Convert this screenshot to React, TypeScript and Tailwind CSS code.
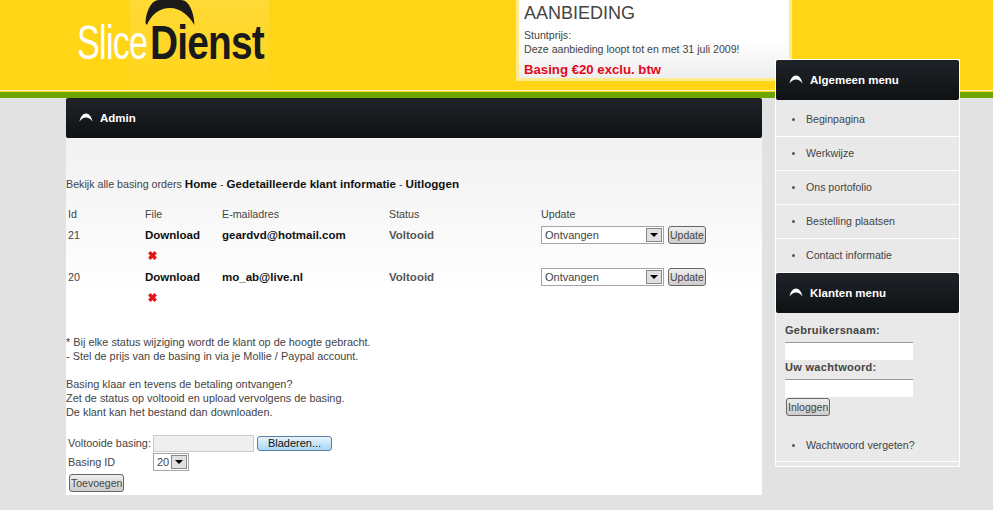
import React from "react";

const font = { arial: "font-['Liberation_Sans',Arial,sans-serif]" };

function Arc({ className }: { className?: string }) {
  return (
    <svg viewBox="0 0 14 9" className={className} fill="currentColor">
      <path d="M0.5 8.5C1.500 3.500 4 0.500 7 0.500s5.500 3 6.500 8C11.500 6 9.500 4.600 7 4.600S2.500 6 0.500 8.500z" />
    </svg>
  );
}

function PanelHeader({ title }: { title: string }) {
  return (
    <div className="flex h-10 items-center rounded-[2px] bg-gradient-to-b from-[#1f2328] to-[#0f1214] pb-[1px] pl-[13px] text-white">
      <Arc className="h-[9px] w-[14px] text-white" />
      <span className="ml-[7px] mt-[2px] text-[11.500px] font-bold">{title}</span>
    </div>
  );
}

function Select({ value, width }: { value: string; width: string }) {
  return (
    <div className={`flex h-[18px] items-center justify-between border border-[#a5a5a5] bg-white pl-[3px] pr-[1px] text-[11px] text-[#444] ${width}`}>
      <span>{value}</span>
      <span className="flex h-[14px] w-[16px] items-center justify-center border border-[#888] bg-[#e0e0e0]">
        <span className="h-0 w-0 border-x-[4px] border-t-[4px] border-x-transparent border-t-black" />
      </span>
    </div>
  );
}

function GreyButton({ label }: { label: string }) {
  return (
    <button className="h-[18px] rounded-[3px] border border-[#666] bg-gradient-to-b from-[#eee] to-[#ccc] px-[1px] text-[10.500px] leading-none text-[#444]">
      {label}
    </button>
  );
}

function RedX() {
  return (
    <svg viewBox="0 0 12 12" className="h-[11px] w-[11px]">
      <path d="M2.500 2.500l7 7M9.500 2.500l-7 7" stroke="#e2161a" strokeWidth="3.600" />
    </svg>
  );
}

const orders = [
  { id: "21", email: "geardvd@hotmail.com" },
  { id: "20", email: "mo_ab@live.nl" },
];

const menu = ["Beginpagina", "Werkwijze", "Ons portofolio", "Bestelling plaatsen", "Contact informatie"];

function MenuItem({ label }: { label: string }) {
  return (
    <li className="flex h-[34px] items-center border-b border-white pl-[16px] text-[10.600px] text-[#444]">
      <span className="mr-[11px] h-[3px] w-[3px] rounded-full bg-[#555]" />
      {label}
    </li>
  );
}

export default function App() {
  return (
    <div className={`${font.arial} min-h-[510px] overflow-hidden bg-[#e2e2e2] text-[10.900px] text-[#444]`}>
      {/* Header */}
      <header className="h-[98px] border-b-[6px] border-[#6fa505] bg-[#ffd516]">
        <div className="flex h-[91px] border-b border-[#fff6c8]">
          <div className="relative ml-[130px] h-[90px] w-[139px] bg-gradient-to-b from-[#ffd935] to-[#ffd516]">
            <svg viewBox="0 0 50 26" className="absolute left-[15px] top-0 h-[26px] w-[50px] text-[#1a1a1a]" fill="currentColor">
              <path d="M0.500 23C1 12 6 0 14 0h22c8 0 13 12 13.500 25C44 16 36 8 25 8S6 15 2 25z" />
            </svg>
            <span className="absolute left-[-53px] top-[18px] origin-left scale-x-[0.71] text-[48px] leading-[50px] tracking-[-1px] text-white">
              Slice
            </span>
            <span className="absolute left-[20px] top-[18px] origin-left scale-x-[0.81] text-[48px] font-bold leading-[50px] tracking-[-1px] text-[#1a1a1a]">
              Dienst
            </span>
          </div>
          <div className="ml-[247px] h-[81px] w-[276px] border-[3px] border-t-0 border-[#ffeb8c] bg-gradient-to-b from-white via-white to-[#eeeeee] pl-[5px]">
            <h2 className="mt-[3px] text-[18px] leading-[21px] text-[#444]">AANBIEDING</h2>
            <p className="mt-[4px] text-[10.600px] leading-[14px]">
              Stuntprijs:
              <br />
              Deze aanbieding loopt tot en met 31 juli 2009!
            </p>
            <p className="mt-[6px] text-[13.200px] font-bold leading-[16px] text-[#e2091e]">Basing €20 exclu. btw</p>
          </div>
        </div>
      </header>

      <div className="flex items-start pl-[66px]">
        {/* Main panel */}
        <main className="h-[397px] w-[696px] bg-gradient-to-b from-[#eeeeee] via-white to-white">
          <PanelHeader title="Admin" />
          <p className="mt-[39px] text-[10.700px] leading-[14px]">
            Bekijk alle basing orders{" "}
            <b className="text-[11.600px] text-[#111]">Home</b> - <b className="text-[11.600px] text-[#111]">Gedetailleerde klant informatie</b> -{" "}
            <b className="text-[11.600px] text-[#111]">Uitloggen</b>
          </p>

          <table className="mt-[12px] table-fixed text-left text-[10.700px]">
            <thead>
              <tr className="h-[22px]">
                <th className="w-[79px] pl-[2px] font-normal">Id</th>
                <th className="w-[77px] font-normal">File</th>
                <th className="w-[167px] font-normal">E-mailadres</th>
                <th className="w-[152px] font-normal">Status</th>
                <th className="font-normal">Update</th>
              </tr>
            </thead>
            <tbody>
              {orders.map((order) => (
                <tr key={order.id} className="h-[42px] align-top">
                  <td className="pl-[2px] pt-[2px]">{order.id}</td>
                  <td className="pt-[2px]">
                    <b className="text-[11.500px] text-[#111]">Download</b>
                    <div className="ml-[2px] mt-[6px]">
                      <RedX />
                    </div>
                  </td>
                  <td className="pt-[2px]">
                    <b className="text-[11.500px] text-[#111]">{order.email}</b>
                  </td>
                  <td className="pt-[2px]">
                    <b className="text-[11.500px] text-[#555]">Voltooid</b>
                  </td>
                  <td className="pt-[1px]">
                    <div className="flex items-center gap-[4px]">
                      <Select value="Ontvangen" width="w-[123px]" />
                      <GreyButton label="Update" />
                    </div>
                  </td>
                </tr>
              ))}
            </tbody>
          </table>

          <p className="mt-[26px] leading-[14px]">
            * Bij elke status wijziging wordt de klant op de hoogte gebracht.
            <br />- Stel de prijs van de basing in via je Mollie / Paypal account.
          </p>
          <p className="mt-[14px] leading-[14px]">
            Basing klaar en tevens de betaling ontvangen?
            <br />
            Zet de status op voltooid en upload vervolgens de basing.
            <br />
            De klant kan het bestand dan downloaden.
          </p>

          <div className="mt-[15px] pl-[2px]">
            <div className="flex h-[18px] items-center">
              <span className="w-[85px]">Voltooide basing:</span>
              <span className="h-[17px] w-[101px] border border-[#ccc] bg-[#efefef]" />
              <button className="ml-[3px] h-[15px] w-[75px] rounded-[3px] border border-[#5b7fa5] bg-gradient-to-b from-[#e6f3fc] to-[#a9d8f5] text-[11px] leading-none text-[#111]">
                Bladeren...
              </button>
            </div>
            <div className="mt-[1px] flex h-[18px] items-center">
              <span className="w-[85px]">Basing ID</span>
              <Select value="20" width="w-[36px]" />
            </div>
            <div className="mt-[3px] pl-[1px]">
              <GreyButton label="Toevoegen" />
            </div>
          </div>
        </main>

        {/* Sidebar */}
        <aside className="relative z-10 ml-[13px] mt-[-39px] w-[185px] border border-white bg-[#e9e9e9]">
          <PanelHeader title="Algemeen menu" />
          <ul className="pt-[3px]">
            {menu.map((item) => (
              <MenuItem key={item} label={item} />
            ))}
          </ul>
          <PanelHeader title="Klanten menu" />
          <div className="px-[9px] pt-[10px]">
            <label className="block text-[11px] font-bold leading-[14px] tracking-[0.3px] text-[#444]">Gebruikersnaam:</label>
            <input className="mt-[5px] block h-[18px] w-[128px] border-t border-[#999] bg-white" />
            <label className="block text-[11px] font-bold leading-[14px] tracking-[0.3px] text-[#444]">Uw wachtwoord:</label>
            <input className="mt-[5px] block h-[18px] w-[128px] border-t border-[#999] bg-white" />
            <div className="mt-[1px] pl-[1px]">
              <GreyButton label="Inloggen" />
            </div>
          </div>
          <div className="mt-[20px] flex h-[26px] items-center border-b border-white pb-[6px] pl-[16px] text-[10.600px] text-[#444]">
            <span className="mr-[11px] h-[3px] w-[3px] rounded-full bg-[#555]" />
            Wachtwoord vergeten?
          </div>
          <div className="h-[4px]" />
        </aside>
      </div>
    </div>
  );
}
